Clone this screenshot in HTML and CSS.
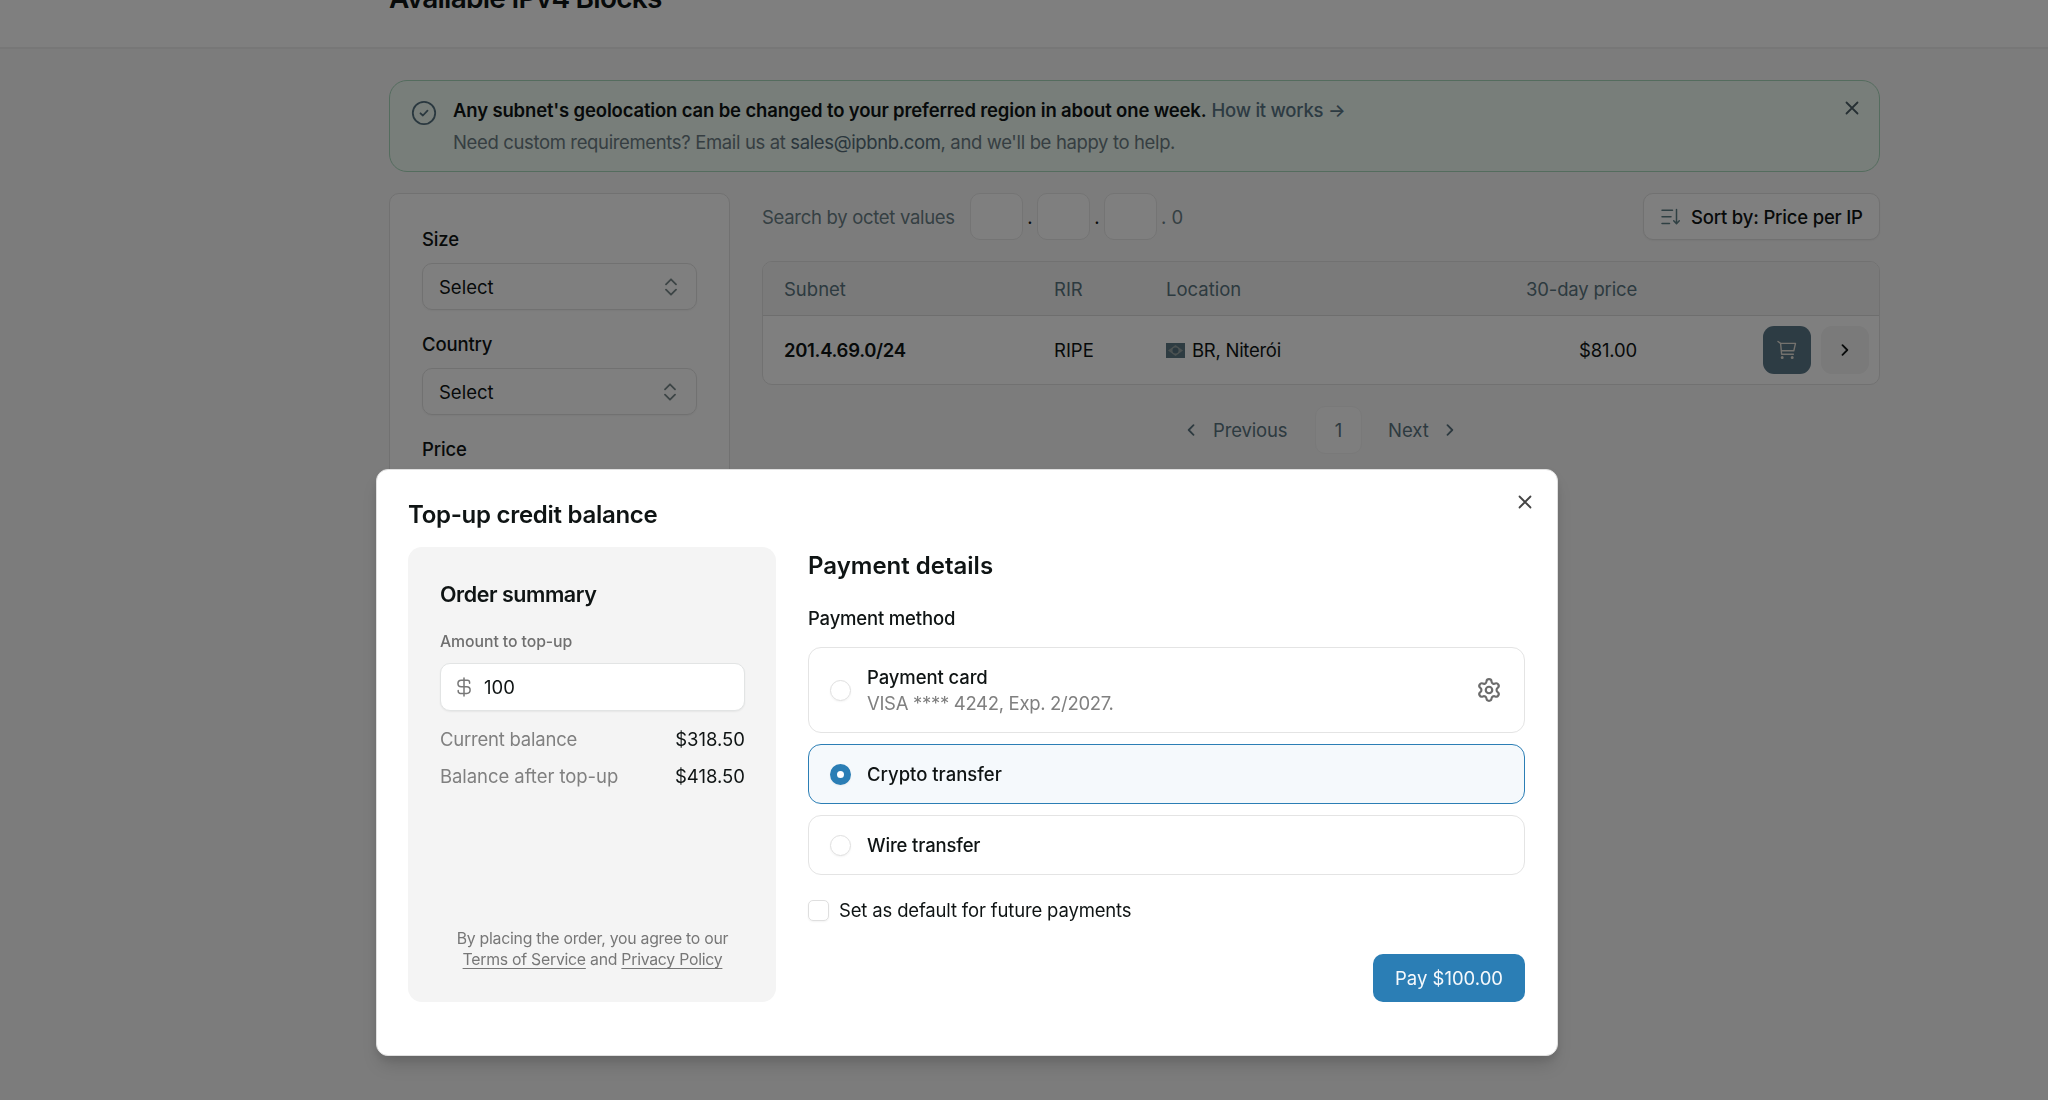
FILE: index.html
```html
<!DOCTYPE html>
<html lang="en">

<head>
  <meta charset="utf-8">
  <title>Available IPv4 Blocks</title>
  <link rel="stylesheet" href="styles.css">
</head>

<body>
  <header class="page-header">
    <h1 class="page-title">Available IPv4 Blocks</h1>
  </header>

  <main class="container">
    <div class="banner">
      <svg class="banner-icon" viewBox="0 0 26 26">
        <circle cx="13" cy="13" r="11.2" />
        <path d="M9.5 13.3l2.4 2.2 4.6-4.8" />
      </svg>
      <div class="banner-content">
        <div class="banner-title"><strong>Any subnet's geolocation can be changed to your preferred region in about one week.</strong> <a class="banner-link" href="#">How it works →</a></div>
        <div class="banner-text">Need custom requirements? Email us at <a class="banner-mail" href="#">sales@ipbnb.com</a>, and we'll be happy to help.</div>
      </div>
      <svg class="banner-close" viewBox="0 0 14 14">
        <path d="M1.5 1.5l11 11M12.5 1.5l-11 11" />
      </svg>
    </div>

    <div class="columns">
      <aside class="filters">
        <div class="filter">
          <div class="filter-label">Size</div>
          <div class="select">
            <span>Select</span>
            <svg class="select-icon" viewBox="0 0 12 18">
              <path d="M1 6.3l5-5 5 5M1 11.7l5 5 5-5" />
            </svg>
          </div>
        </div>
        <div class="filter">
          <div class="filter-label">Country</div>
          <div class="select">
            <span>Select</span>
            <svg class="select-icon shifted" viewBox="0 0 12 18">
              <path d="M1 6.3l5-5 5 5M1 11.7l5 5 5-5" />
            </svg>
          </div>
        </div>
        <div class="filter">
          <div class="filter-label">Price</div>
          <div class="select"></div>
        </div>
      </aside>

      <section class="results">
        <div class="toolbar">
          <span class="search-label">Search by octet values</span>
          <span class="octet"></span>
          <span class="dot">.</span>
          <span class="octet"></span>
          <span class="dot">.</span>
          <span class="octet"></span>
          <span class="last-octet">. 0</span>
          <button class="sort-button" type="button">
            <svg class="sort-icon" viewBox="0 0 20 18">
              <path d="M1 2.2h10.5M1 8.8h9M1 15.4h7.5" />
              <path d="M15.5 1.5v14M12.7 12.8l2.8 3 2.8-3" />
            </svg>
            <span>Sort by: Price per IP</span>
          </button>
        </div>

        <div class="table">
          <div class="row head">
            <span>Subnet</span>
            <span>RIR</span>
            <span>Location</span>
            <span class="price">30-day price</span>
          </div>
          <div class="row">
            <span class="subnet">201.4.69.0/24</span>
            <span>RIPE</span>
            <span class="location">
              <svg class="flag" viewBox="0 0 19 15">
                <rect class="flag-field" width="19" height="15" />
                <path class="flag-rhombus" d="M9.5 2L17 7.5 9.5 13 2 7.5z" />
                <circle class="flag-globe" cx="9.5" cy="7.5" r="3" />
              </svg>
              <span class="city">BR, Niterói</span>
            </span>
            <span class="price">$81.00</span>
            <span class="actions">
              <button class="cart-button" type="button">
                <svg class="cart-icon" viewBox="0 0 20 20">
                  <path d="M1 1.5l2.6 1.9 1 10.800h11.800M3.600 3.400h14.900l-1.700 7.400H4.300" />
                  <circle cx="5.2" cy="17.5" r=".8" />
                  <circle cx="15.2" cy="17.5" r=".8" />
                </svg>
              </button>
              <button class="more-button" type="button">
                <svg class="chevron" viewBox="0 0 8 12">
                  <path d="M1.5 1.2L6.3 6l-4.800 4.800" />
                </svg>
              </button>
            </span>
          </div>
        </div>

        <nav class="pagination">
          <svg class="chevron" viewBox="0 0 8 12">
            <path d="M6.5 1.2L1.7 6l4.800 4.800" />
          </svg>
          <span class="previous">Previous</span>
          <span class="page-number">1</span>
          <span class="next">Next</span>
          <svg class="chevron" viewBox="0 0 8 12">
            <path d="M1.5 1.2L6.3 6l-4.800 4.800" />
          </svg>
        </nav>
      </section>
    </div>
  </main>

  <div class="overlay"></div>

  <div class="modal">
    <h2 class="modal-title">Top-up credit balance</h2>
    <svg class="modal-close" viewBox="0 0 14 14">
      <path d="M1.5 1.5l11 11M12.5 1.5l-11 11" />
    </svg>

    <div class="modal-body">
      <div class="summary">
        <h3 class="summary-title">Order summary</h3>
        <div class="amount-label">Amount to top-up</div>
        <div class="amount-input">
          <svg class="dollar-icon" viewBox="0 0 14 20">
            <path d="M7 1v18M12.6 6.3V5.5A2.2 2.2 0 0 0 10.4 3.3H4.2a3.2 3.2 0 0 0 0 6.5h5.6a3.3 3.3 0 0 1 0 6.600H3.400A2.200 2.200 0 0 1 1.200 14.200v-.8" />
          </svg>
          <span>100</span>
        </div>
        <div class="summary-row">
          <span class="muted current">Current balance</span>
          <span class="value">$318.50</span>
        </div>
        <div class="summary-row">
          <span class="muted">Balance after top-up</span>
          <span class="value">$418.50</span>
        </div>
        <div class="terms">By placing the order, you agree to our<br><a href="#">Terms of Service</a> and <a href="#">Privacy Policy</a></div>
      </div>

      <div class="payment">
        <h2 class="payment-title">Payment details</h2>
        <div class="method-label">Payment method</div>

        <div class="method card">
          <span class="radio"></span>
          <div class="method-content">
            <div class="method-name card-name">Payment card</div>
            <div class="method-description">VISA **** 4242, Exp. 2/2027.</div>
          </div>
          <svg class="gear-icon" viewBox="0 0 24 24">
            <path d="M9.671 4.136a2.34 2.34 0 0 1 4.659 0 2.34 2.34 0 0 0 3.319 1.915 2.34 2.34 0 0 1 2.33 4.033 2.34 2.34 0 0 0 0 3.831 2.34 2.34 0 0 1-2.33 4.033 2.34 2.34 0 0 0-3.319 1.915 2.34 2.34 0 0 1-4.659 0 2.34 2.34 0 0 0-3.32-1.915 2.34 2.34 0 0 1-2.33-4.033 2.34 2.34 0 0 0 0-3.831A2.34 2.34 0 0 1 6.35 6.051a2.34 2.34 0 0 0 3.319-1.915" />
            <circle cx="12" cy="12" r="3" />
          </svg>
        </div>

        <div class="method selected">
          <span class="radio checked"></span>
          <div class="method-name">Crypto transfer</div>
        </div>

        <div class="method">
          <span class="radio"></span>
          <div class="method-name wire-name">Wire transfer</div>
        </div>

        <div class="default-option">
          <span class="checkbox"></span>
          <span class="default-label">Set as default for future payments</span>
        </div>

        <button class="pay-button" type="button">Pay $100.00</button>
      </div>
    </div>
  </div>
</body>

</html>
```
FILE: styles.css
```css
* {
  box-sizing: border-box;
}

body {
  margin: 0;
  height: 1100px;
  overflow: hidden;
  background-color: #f9f9f9;
  color: #0f1414;
  font-family: Inter, "Liberation Sans", sans-serif;
  font-size: 18.5px;
  line-height: 26px;
  white-space: nowrap;
}

h1,
h2,
h3 {
  margin: 0;
  font-weight: 600;
}

button {
  font-family: inherit;
  font-size: inherit;
  color: inherit;
  border: none;
  padding: 0;
}

svg {
  flex: none;
  fill: none;
  stroke: currentColor;
  stroke-width: 1.8;
  stroke-linecap: round;
  stroke-linejoin: round;
}

a {
  color: inherit;
}

.page-header {
  display: flex;
  height: 49px;
  padding-left: 389px;
  background-color: #fff;
  border-bottom: 2px solid #efefef;
}

.page-title {
  margin-top: -22px;
  font-size: 28px;
  line-height: 40px;
  letter-spacing: -0.75px;
}

.container {
  width: 1491px;
  margin: 31px 0 0 389px;
}

/* Info banner */
.banner {
  display: flex;
  height: 92px;
  padding: 16px 20px 0 21px;
  border: 1px solid #a9d8bd;
  border-radius: 18px;
  background-color: #f0fdf4;
}

.banner-icon {
  width: 26px;
  height: 26px;
  margin-top: 3px;
  color: #54707f;
}

.banner-content {
  flex: 1;
  margin-left: 16px;
}

.banner-title {
  height: 26px;
  letter-spacing: -0.155px;
}

.banner-title strong {
  font-weight: 600;
}

.banner-link {
  font-weight: 500;
  letter-spacing: -0.25px;
  color: #5b7686;
  text-decoration: none;
}

.banner-text {
  margin-top: 6px;
  letter-spacing: -0.36px;
  color: #6c7c84;
}

.banner-mail {
  color: #566d7a;
  text-decoration: none;
}

.banner-close {
  width: 14px;
  height: 14px;
  margin-top: 4px;
  color: #4d5f68;
}

.columns {
  display: flex;
  align-items: flex-start;
  gap: 32px;
  margin-top: 21px;
}

/* Filters */
.filters {
  width: 341px;
  height: 600px;
  padding: 32px;
  background-color: #fff;
  border: 1px solid #e2e2e2;
  border-radius: 10px;
}

.filter {
  height: 105px;
}

.filter-label {
  font-weight: 500;
  letter-spacing: -0.15px;
}

.select {
  display: flex;
  align-items: center;
  justify-content: space-between;
  height: 47px;
  margin-top: 11px;
  padding: 0 19px 0 16px;
  border: 1px solid #e2e2e2;
  border-radius: 10px;
  box-shadow: 0 1px 2px rgba(0, 0, 0, 0.05);
}

.select-icon {
  width: 12px;
  height: 18px;
  color: #7a8a8c;
}

.select-icon.shifted {
  margin-right: 1px;
}

/* Results */
.results {
  flex: 1;
}

.toolbar {
  display: flex;
  align-items: center;
  height: 47px;
}

.search-label {
  width: 208px;
  letter-spacing: -0.3px;
  color: #6b8087;
}

.octet {
  width: 53px;
  height: 47px;
  border: 1px solid #e8e8e8;
  border-radius: 10px;
  background-color: #fff;
}

.dot {
  width: 14px;
  text-align: center;
}

.last-octet {
  margin-left: 4px;
  color: #6b8087;
}

.sort-button {
  display: flex;
  align-items: center;
  gap: 10px;
  width: 237px;
  height: 47px;
  margin-left: auto;
  padding-left: 17px;
  border: 1px solid #e2e2e2;
  border-radius: 10px;
  background-color: #fff;
  font-weight: 500;
  letter-spacing: -0.19px;
  box-shadow: 0 1px 2px rgba(0, 0, 0, 0.05);
}

.sort-icon {
  width: 20px;
  height: 18px;
  color: #5f8087;
  stroke-width: 1.5;
}

.table {
  height: 124px;
  margin-top: 21px;
  border: 1px solid #e2e2e2;
  border-radius: 10px;
  background-color: #fff;
  overflow: hidden;
}

.row {
  display: grid;
  grid-template-columns: 270px 112px 280px 191px 1fr;
  align-items: center;
  height: 68px;
  padding: 0 10px 0 21px;
}

.row.head {
  height: 54px;
  border-bottom: 1px solid #dcdcdc;
  background-color: #f4f4f4;
  color: #5b7480;
}

.subnet {
  font-weight: 600;
  letter-spacing: -0.32px;
}

.location {
  display: flex;
  align-items: center;
  gap: 7px;
}

.flag {
  width: 19px;
  height: 15px;
  stroke: none;
}

.flag-field {
  fill: #5d7885;
}

.flag-rhombus {
  fill: #96a3a2;
}

.flag-globe {
  fill: #54707f;
}

.city {
  letter-spacing: -0.27px;
}

.price {
  text-align: right;
  letter-spacing: -0.18px;
}

.actions {
  display: flex;
  justify-content: flex-end;
  gap: 10px;
}

.cart-button,
.more-button {
  display: flex;
  align-items: center;
  justify-content: center;
  width: 48px;
  height: 48px;
  border-radius: 11px;
}

.cart-button {
  background-color: #5b7888;
  color: #e8e4dc;
}

.cart-icon {
  width: 20px;
  height: 20px;
  stroke-width: 1.4;
}

.more-button {
  background-color: #f4f4f4;
}

.chevron {
  width: 8px;
  height: 12px;
}

.pagination {
  display: flex;
  align-items: center;
  margin: 21px 0 0 425px;
  height: 48px;
  color: #5b7480;
}

.previous {
  width: 102px;
  margin-left: 18px;
  letter-spacing: -0.15px;
}

.page-number {
  width: 47px;
  height: 48px;
  border: 1px solid #f2f2f2;
  border-radius: 10px;
  background-color: #fdfdfd;
  line-height: 46px;
  text-align: center;
}

.next {
  width: 58px;
  margin-left: 26px;
}

.overlay {
  position: fixed;
  inset: 0;
  background-color: rgba(0, 0, 0, 0.5);
}

/* Modal */
.modal {
  position: absolute;
  top: 469px;
  left: 376px;
  width: 1182px;
  height: 587px;
  padding: 29px 32px 0 31px;
  border: 1px solid #e0e0e0;
  border-radius: 12px;
  background-color: #fff;
  box-shadow: 0 12px 18px -4px rgba(0, 0, 0, 0.15), 0 4px 8px rgba(0, 0, 0, 0.08);
}

.modal-title,
.payment-title {
  font-size: 24px;
  line-height: 32px;
}

.modal-title {
  letter-spacing: -0.28px;
}

.modal-close {
  position: absolute;
  top: 25px;
  right: 25px;
  width: 14px;
  height: 14px;
  color: #444;
}

.modal-body {
  display: flex;
  gap: 32px;
  margin-top: 16px;
}

.summary {
  display: flex;
  flex-direction: column;
  width: 368px;
  height: 455px;
  padding: 32px 31px 32px 32px;
  border-radius: 14px;
  background-color: #f4f4f4;
}

.summary-title {
  font-size: 21.5px;
  line-height: 30px;
  letter-spacing: -0.45px;
}

.amount-label {
  margin-top: 21px;
  color: #6f6f6f;
  font-size: 15.8px;
  font-weight: 500;
  line-height: 24px;
  letter-spacing: -0.08px;
}

.amount-input {
  display: flex;
  align-items: center;
  height: 48px;
  margin: 9px 0 15px;
  padding-left: 16px;
  border: 1px solid #e2e4e4;
  border-radius: 10px;
  background-color: #fff;
  box-shadow: 0 1px 2px rgba(0, 0, 0, 0.06);
}

.dollar-icon {
  width: 14px;
  height: 20px;
  margin-right: 13px;
  color: #777;
  stroke-width: 1.5;
}

.summary-row {
  display: flex;
  justify-content: space-between;
  margin-bottom: 11px;
}

.muted,
.method-description {
  color: #808080;
}

.muted {
  letter-spacing: -0.06px;
}

.muted.current {
  letter-spacing: -0.22px;
}

.terms {
  margin-top: auto;
  color: #777;
  font-size: 15.8px;
  line-height: 21px;
  letter-spacing: -0.25px;
  text-align: center;
}

.terms a {
  text-underline-offset: 3px;
}

.payment {
  display: flex;
  flex-direction: column;
  flex: 1;
  padding-top: 3px;
}

.method-label {
  margin: 23px 0 16px;
  font-weight: 500;
  letter-spacing: -0.18px;
}

.method {
  display: flex;
  align-items: center;
  height: 60px;
  margin-bottom: 11px;
  padding: 0 21px;
  border: 1px solid #e4e4e4;
  border-radius: 13px;
}

.method.card {
  height: 86px;
}

.method.selected {
  border-color: #2b7eb5;
  background-color: #f5f9fc;
}

.method-content {
  flex: 1;
}

.method-name {
  font-weight: 500;
}

.card-name {
  letter-spacing: -0.1px;
}

.wire-name {
  letter-spacing: -0.15px;
}

.method-description {
  letter-spacing: -0.31px;
}

.radio {
  width: 21px;
  height: 21px;
  margin-right: 16px;
  border: 1px solid #dfdfdf;
  border-radius: 50%;
  box-shadow: 0 1px 2px rgba(0, 0, 0, 0.05);
}

.radio.checked {
  border: 7px solid #2b7eb5;
  background-color: #fff;
}

.gear-icon {
  width: 26px;
  height: 26px;
  margin-right: 1px;
  color: #6c6c6c;
  stroke-width: 2;
}

.default-option {
  display: flex;
  align-items: center;
  height: 26px;
  margin-top: 11px;
}

.checkbox {
  width: 21px;
  height: 21px;
  margin-right: 10px;
  border: 1px solid #dfdfdf;
  border-radius: 5px;
  box-shadow: 0 1px 2px rgba(0, 0, 0, 0.05);
}

.default-label {
  letter-spacing: -0.16px;
}

.pay-button {
  align-self: flex-end;
  width: 152px;
  height: 48px;
  margin-top: 31px;
  border-radius: 10px;
  background-color: #2b7eb5;
  color: #f5f9fc;
}
```
